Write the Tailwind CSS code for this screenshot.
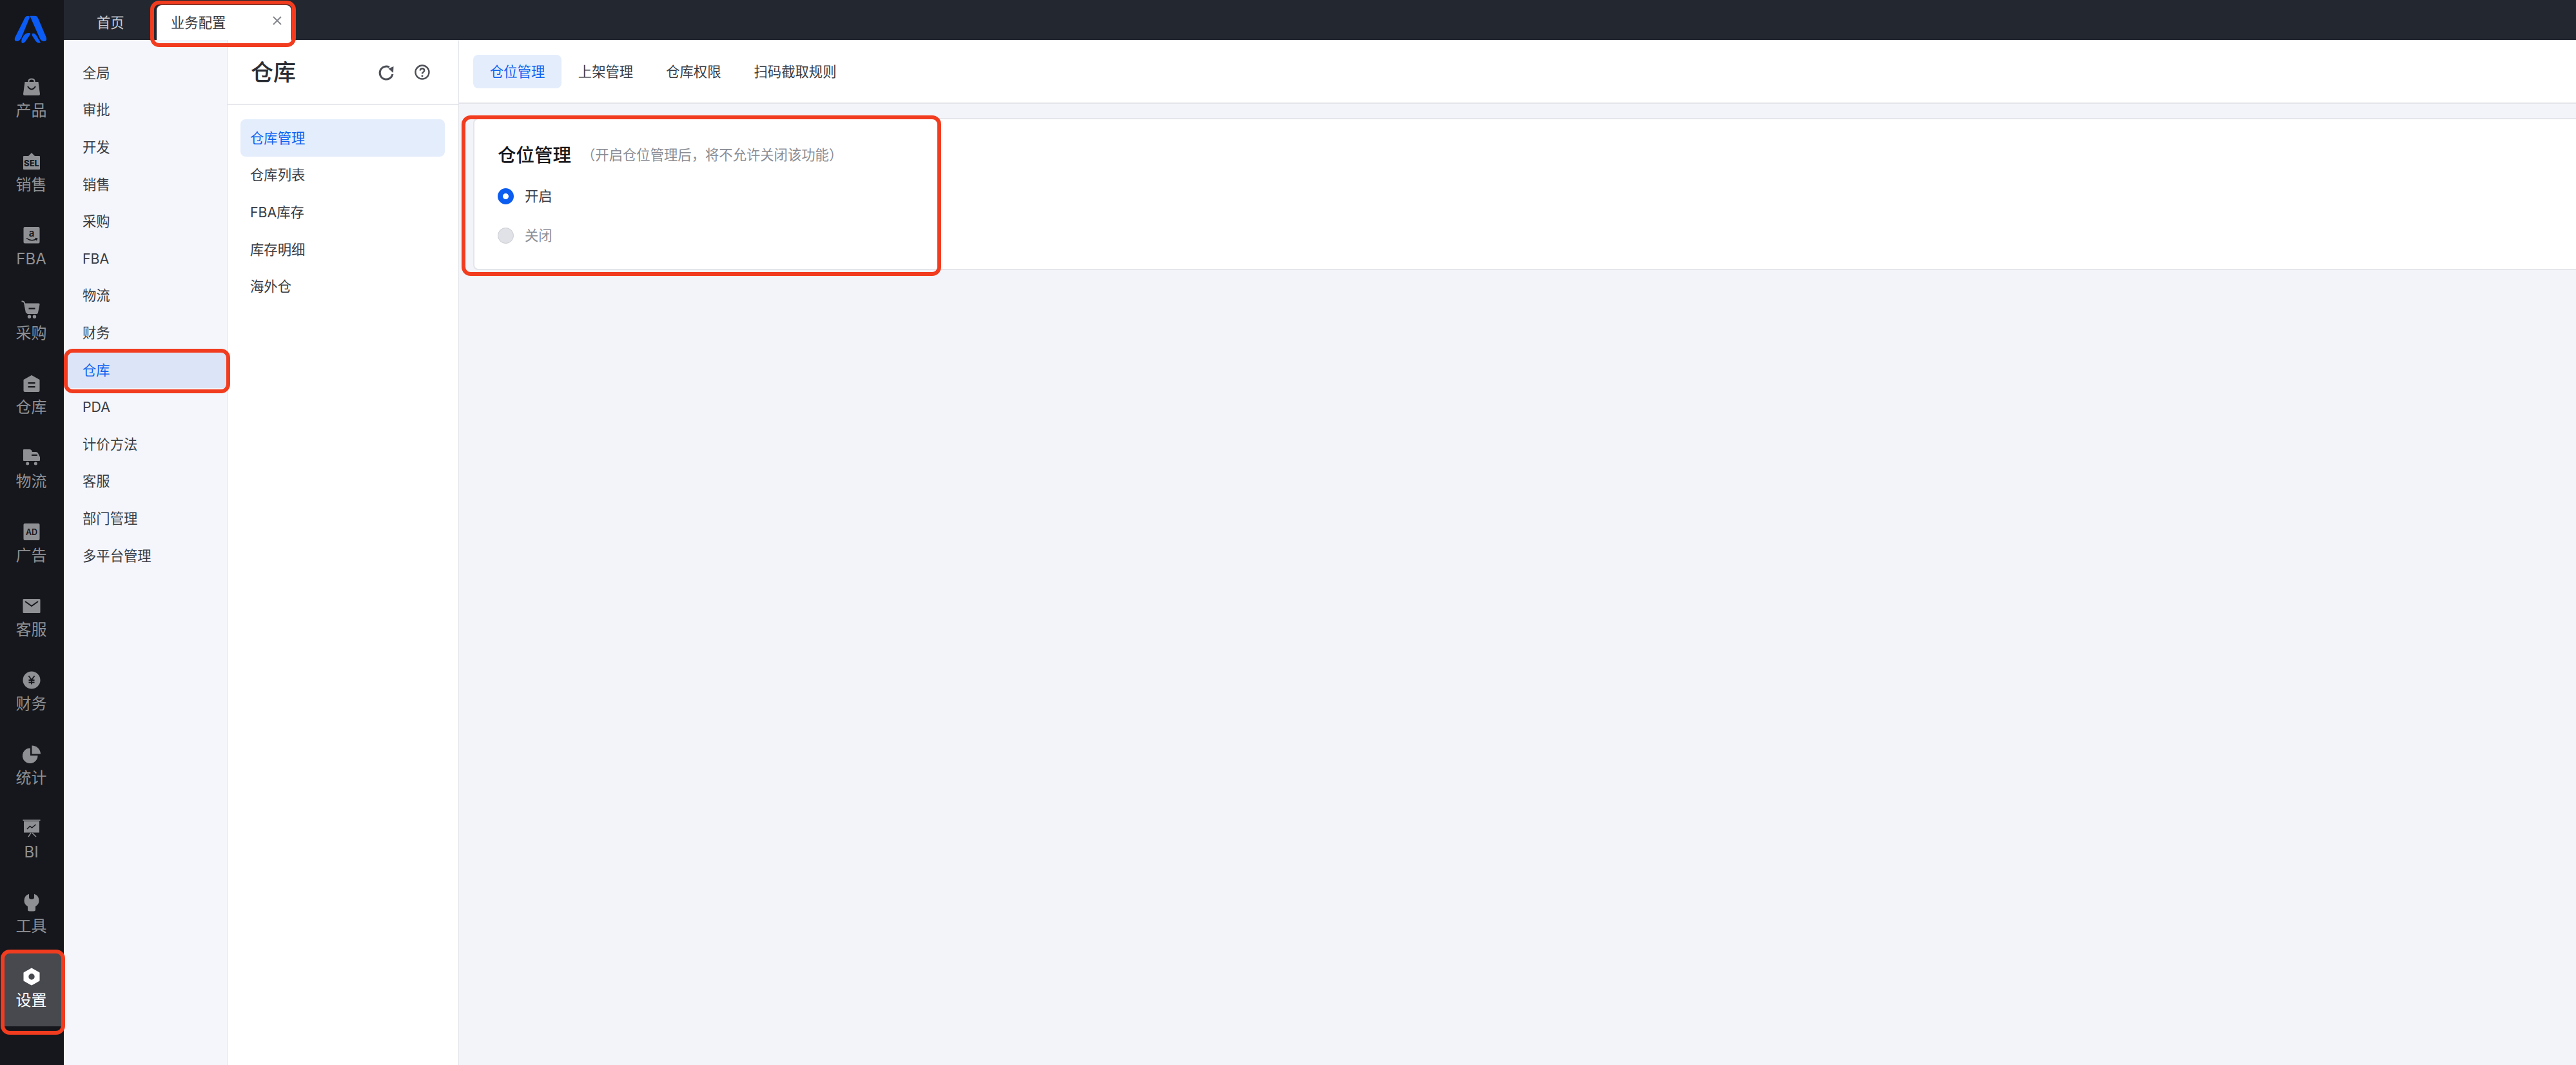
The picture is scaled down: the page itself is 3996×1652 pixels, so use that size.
<!DOCTYPE html>
<html lang="zh-CN">
<head>
  <meta charset="UTF-8">
  <meta name="viewport" content="width=device-width, initial-scale=1.0">
  <title>业务配置</title>
  <script src="https://cdn.jsdelivr.net/npm/@tailwindcss/browser@4"></script>
</head>
<body class="relative w-[3996px] h-[1652px] overflow-hidden flex bg-[#f2f4f9] text-[#3a3d44] text-[21.33px] font-['Inter','Noto_Sans_CJK_SC',sans-serif]">

  <!-- Main rail -->
  <aside class="w-[99px] shrink-0 bg-[#15171c] flex flex-col text-[#8e9094] text-[24px]">
    <div class="h-[98px] pl-[19px] pt-[20px]">
      <svg class="w-[60px] h-[60px]" viewBox="0 0 180 180" fill="#0b5cf5">
        <path d="M60 20Q66 13 74 14Q83 15 80 24L44 112Q36 132 22 132Q8 132 12 116Z"/>
        <path d="M82 14H106Q116 14 120 24L159 116Q162 132 148 132Q134 132 128 118Z"/>
        <path d="M44 139Q40 128 48 114Q60 92 78 93Q86 93 84 100L62 132Q52 145 44 139Z"/>
        <path d="M92 97Q104 92 112 104L132 138Q118 145 108 130L92 105Z"/>
      </svg>
    </div>

    <a class="h-[115px] pr-[2px] flex flex-col items-center pt-[23px]">
      <svg class="w-[28px] h-[28px]" viewBox="0 0 28 28" fill="#8e9094"><path d="M3.5 6H24.5L27 25Q27 27 25 27H3Q1 27 1 25Z"/><path d="M9.5 7V5Q9.5 1.5 14 1.5T18.5 5V7" fill="none" stroke="#8e9094" stroke-width="2"/><path d="M8 13Q14 22 20 13" fill="none" stroke="#15171c" stroke-width="2"/></svg>
      <span class="mt-[6px] h-[34px] leading-[34px]">产品</span>
    </a>
    <a class="h-[115px] pr-[2px] flex flex-col items-center pt-[23px]">
      <svg class="w-[28px] h-[28px]" viewBox="0 0 28 28" fill="#8e9094"><path d="M2 6H9L14 1L19 6H26Q27 6 27 7V26Q27 27 26 27H2Q1 27 1 26V7Q1 6 2 6Z"/><text x="14" y="21.5" text-anchor="middle" font-size="13" font-weight="800" fill="#15171c" font-family="Inter">SEL</text></svg>
      <span class="mt-[6px] h-[34px] leading-[34px]">销售</span>
    </a>
    <a class="h-[115px] pr-[2px] flex flex-col items-center pt-[23px]">
      <svg class="w-[28px] h-[28px]" viewBox="0 0 28 28" fill="#8e9094"><rect x="1.5" y="1" width="25" height="25.5" rx="2"/><text x="14" y="16" text-anchor="middle" font-size="15" font-weight="600" fill="#15171c" font-family="Inter">a</text><path d="M6 18.5Q14 24.5 22 19.5M19.5 18.5L22.5 19L21.5 22" fill="none" stroke="#15171c" stroke-width="1.5"/></svg>
      <span class="mt-[6px] h-[34px] leading-[34px]">FBA</span>
    </a>
    <a class="h-[115px] pr-[2px] flex flex-col items-center pt-[23px]">
      <svg class="w-[32px] h-[28px]" viewBox="0 0 32 28" fill="#8e9094"><path d="M4.5 4.5H27Q29 4.5 28.5 6.5L26 19Q25.5 21 24 21H10Q8.5 21 8 19Z"/><path d="M0.5 1.5H2.5Q4 1.5 5 4L8 19" fill="none" stroke="#8e9094" stroke-width="2"/><circle cx="12.5" cy="25.3" r="2.7"/><circle cx="20.5" cy="25.3" r="2.7"/><rect x="11.5" y="11.5" width="10" height="2.2" fill="#15171c"/></svg>
      <span class="mt-[6px] h-[34px] leading-[34px]">采购</span>
    </a>
    <a class="h-[115px] pr-[2px] flex flex-col items-center pt-[23px]">
      <svg class="w-[28px] h-[28px]" viewBox="0 0 28 28" fill="#8e9094"><path d="M14 1L26.5 8V25Q26.5 27 24.5 27H3.5Q1.5 27 1.5 25V8Z"/><rect x="8.5" y="12" width="11" height="2.2" fill="#15171c"/><rect x="8.5" y="18" width="11" height="2.2" fill="#15171c"/></svg>
      <span class="mt-[6px] h-[34px] leading-[34px]">仓库</span>
    </a>
    <a class="h-[115px] pr-[2px] flex flex-col items-center pt-[23px]">
      <svg class="w-[28px] h-[28px]" viewBox="0 0 28 28" fill="#8e9094"><path d="M2 1H11Q13 1 14 2.5L15 5H21Q23 5 24 7L27 13V18Q27 19 26 19H2Q1 19 1 18V2Q1 1 2 1Z"/><circle cx="7.7" cy="23" r="2.5"/><circle cx="20.3" cy="23" r="2.5"/><rect x="14" y="9" width="9" height="2" fill="#15171c"/></svg>
      <span class="mt-[6px] h-[34px] leading-[34px]">物流</span>
    </a>
    <a class="h-[115px] pr-[2px] flex flex-col items-center pt-[23px]">
      <svg class="w-[28px] h-[28px]" viewBox="0 0 28 28" fill="#8e9094"><rect x="1.5" y="1" width="25" height="26" rx="2"/><text x="14" y="18.5" text-anchor="middle" font-size="12.5" font-weight="600" fill="#15171c" font-family="Inter">AD</text></svg>
      <span class="mt-[6px] h-[34px] leading-[34px]">广告</span>
    </a>
    <a class="h-[115px] pr-[2px] flex flex-col items-center pt-[23px]">
      <svg class="w-[28px] h-[28px]" viewBox="0 0 28 28" fill="#8e9094"><rect x="0.5" y="3" width="27" height="22" rx="1.5"/><path d="M4 7L14 14L24 7" fill="none" stroke="#15171c" stroke-width="2"/></svg>
      <span class="mt-[6px] h-[34px] leading-[34px]">客服</span>
    </a>
    <a class="h-[115px] pr-[2px] flex flex-col items-center pt-[23px]">
      <svg class="w-[28px] h-[28px]" viewBox="0 0 28 28" fill="#8e9094"><circle cx="14" cy="14" r="13.5"/><path d="M9.5 7.5L14 13.5L18.5 7.5M14 13.5V20.5M9.5 14H18.5M9.5 17.5H18.5" fill="none" stroke="#15171c" stroke-width="1.8"/></svg>
      <span class="mt-[6px] h-[34px] leading-[34px]">财务</span>
    </a>
    <a class="h-[115px] pr-[2px] flex flex-col items-center pt-[23px]">
      <svg class="w-[28px] h-[28px]" viewBox="0 0 28 28" fill="#8e9094"><path d="M12 4.5V16H23.5A11.8 11.8 0 1 1 12 4.5Z"/><path d="M14.5 0.5A13.5 13.5 0 0 1 28 13.5H14.5Z"/></svg>
      <span class="mt-[6px] h-[34px] leading-[34px]">统计</span>
    </a>
    <a class="h-[115px] pr-[2px] flex flex-col items-center pt-[23px]">
      <svg class="w-[28px] h-[28px]" viewBox="0 0 28 28" fill="#8e9094"><rect x="0.5" y="0.5" width="27" height="1.5"/><path d="M2 3H26V20.5H2Z"/><path d="M7 15L11.5 10.5L14.5 13L20.5 8" fill="none" stroke="#15171c" stroke-width="1.5"/><path d="M13 21L9 27M15 21L21 27" fill="none" stroke="#8e9094" stroke-width="1.5"/></svg>
      <span class="mt-[6px] h-[34px] leading-[34px]">BI</span>
    </a>
    <a class="h-[115px] pr-[2px] flex flex-col items-center pt-[23px]">
      <svg class="w-[28px] h-[28px]" viewBox="0 0 28 28" fill="#8e9094"><path d="M10 0.8V6Q10 9 14 9T18 6V0.8Q25.5 3 25.5 11Q25.5 17 20 20V25Q20 27.5 17 27.5H11Q8 27.5 8 25V20Q2.5 17 2.5 11Q2.5 3 10 0.8Z"/></svg>
      <span class="mt-[6px] h-[34px] leading-[34px]">工具</span>
    </a>
    <a class="h-[114px] ml-[6px] mr-[4px] pr-[4px] bg-[#47494f] text-white flex flex-col items-center pt-[23px]">
      <svg class="w-[28px] h-[28px]" viewBox="0 0 28 28"><path d="M14 1.5L25.5 8V20L14 26.5L2.5 20V8Z" fill="#ffffff" stroke="#ffffff" stroke-width="2" stroke-linejoin="round"/><circle cx="14" cy="14" r="4.7" fill="#47494f"/></svg>
      <span class="mt-[6px] h-[34px] leading-[34px]">设置</span>
    </a>
  </aside>

  <div class="flex-1 flex flex-col min-w-0">
    <!-- Tab bar -->
    <header class="h-[62px] shrink-0 bg-[#232730] flex">
      <div class="w-[144px] pl-[51px] pt-[8px] leading-[54px] text-[#c9cbd0]">首页</div>
      <div class="w-[209px] mt-[8px] bg-white rounded-t-[8px] flex justify-between pl-[22px] pr-[14px] leading-[54px]">
        <span>业务配置</span>
        <svg class="w-[16px] h-[16px] mt-[16px]" viewBox="0 0 16 16" fill="none" stroke="#85888e" stroke-width="2"><path d="M2 2L14 14M14 2L2 14"/></svg>
      </div>
    </header>

    <div class="flex-1 flex min-h-0">
      <!-- Category nav -->
      <nav class="w-[254px] shrink-0 bg-[#f4f6fb] border-r border-[#e2e4ea] pt-[22px]">
        <div class="h-[57.6px] pl-[29px] pt-[2px] flex items-center">全局</div>
        <div class="h-[57.6px] pl-[29px] pt-[2px] flex items-center">审批</div>
        <div class="h-[57.6px] pl-[29px] pt-[2px] flex items-center">开发</div>
        <div class="h-[57.6px] pl-[29px] pt-[2px] flex items-center">销售</div>
        <div class="h-[57.6px] pl-[29px] pt-[2px] flex items-center">采购</div>
        <div class="h-[57.6px] pl-[29px] pt-[2px] flex items-center">FBA</div>
        <div class="h-[57.6px] pl-[29px] pt-[2px] flex items-center">物流</div>
        <div class="h-[57.6px] pl-[29px] pt-[2px] flex items-center">财务</div>
        <div class="h-[57.6px] pl-[29px] pt-[2px] flex items-center bg-[#dce5f7] text-[#0f62f0]">仓库</div>
        <div class="h-[57.6px] pl-[29px] pt-[2px] flex items-center">PDA</div>
        <div class="h-[57.6px] pl-[29px] pt-[2px] flex items-center">计价方法</div>
        <div class="h-[57.6px] pl-[29px] pt-[2px] flex items-center">客服</div>
        <div class="h-[57.6px] pl-[29px] pt-[2px] flex items-center">部门管理</div>
        <div class="h-[57.6px] pl-[29px] pt-[2px] flex items-center">多平台管理</div>
      </nav>

      <!-- Warehouse menu -->
      <section class="w-[359px] shrink-0 bg-white border-r border-[#e2e4ea]">
        <div class="h-[101px] border-b-2 border-[#e8e9ee] flex items-center pl-[36px] pr-[44px]">
          <h1 class="pt-[2px] text-[35px] font-medium text-[#2b2e35]">仓库</h1>
          <svg class="w-[28px] h-[28px] ml-auto" viewBox="0 0 28 28" fill="none" stroke="#4d5057" stroke-width="3"><path d="M24 17A10 10 0 1 1 19 6.3"/><path d="M17.5 8.5L25.5 5L25 15Z" fill="#4d5057" stroke="none"/></svg>
          <svg class="w-[24px] h-[24px] ml-[30px]" viewBox="0 0 24 24" fill="none" stroke="#4d5057" stroke-width="2.4"><circle cx="12" cy="12" r="10.5"/><path d="M8.8 9.5Q9 6.3 12 6.3T15.2 9.2Q15.2 11 13.5 12Q12 12.9 12 14.5"/><circle cx="12" cy="17.8" r="1.5" fill="#4d5057" stroke="none"/></svg>
        </div>
        <div class="pt-[22px] px-[20px]">
          <div class="w-[317px] h-[57.6px] pl-[15px] pt-[2px] flex items-center rounded-[8px] bg-[#e4edfc] text-[#0f62f0]">仓库管理</div>
          <div class="h-[57.6px] pl-[15px] pt-[2px] flex items-center">仓库列表</div>
          <div class="h-[57.6px] pl-[15px] pt-[2px] flex items-center">FBA库存</div>
          <div class="h-[57.6px] pl-[15px] pt-[2px] flex items-center">库存明细</div>
          <div class="h-[57.6px] pl-[15px] pt-[2px] flex items-center">海外仓</div>
        </div>
      </section>

      <!-- Content -->
      <main class="flex-1 min-w-0">
        <div class="h-[99px] bg-white border-b-2 border-[#e4e5ea] flex items-center pl-[22px]">
          <div class="h-[52px] px-[26px] pt-[2px] flex items-center rounded-[8px] bg-[#e4edfc] text-[#0f62f0]">仓位管理</div>
          <div class="h-[52px] px-[25.5px] pt-[2px] flex items-center">上架管理</div>
          <div class="h-[52px] px-[25.5px] pt-[2px] flex items-center">仓库权限</div>
          <div class="h-[52px] px-[25.5px] pt-[2px] flex items-center">扫码截取规则</div>
        </div>
        <div class="ml-[22px] mt-[22px] h-[236px] bg-white border-2 border-r-0 border-[#e4e5ea] rounded-l-[8px] pl-[36px] pt-[36px]">
          <div class="h-[40px] flex items-center">
            <h2 class="text-[28.5px] font-medium text-[#15171c]">仓位管理</h2>
            <span class="ml-[16px] text-[#8a8d94]">（开启仓位管理后，将不允许关闭该功能）</span>
          </div>
          <div class="h-[61px] mt-[13px] flex items-center gap-[17px]">
            <span class="w-[25px] h-[25px] rounded-full border-[8px] border-[#0b5cf0] bg-white"></span>
            <span>开启</span>
          </div>
          <div class="h-[61px] flex items-center gap-[17px] text-[#8d9097]">
            <span class="w-[25px] h-[25px] rounded-full border border-[#cbcdd3] bg-[#e0e2e7]"></span>
            <span>关闭</span>
          </div>
        </div>
      </main>
    </div>
  </div>

  <!-- Red annotation frames drawn over the screenshot -->
  <div class="absolute left-[233px] top-[1px] w-[226px] h-[72px] border-[6px] border-[#f23c1f] rounded-[14px]"></div>
  <div class="absolute left-[99px] top-[541px] w-[258px] h-[69px] border-[6px] border-[#f23c1f] rounded-[14px]"></div>
  <div class="absolute left-[716px] top-[179px] w-[744px] h-[249px] border-[6px] border-[#f23c1f] rounded-[14px]"></div>
  <div class="absolute left-[1px] top-[1473px] w-[100px] h-[132px] border-[6px] border-[#f23c1f] rounded-[14px]"></div>
</body>
</html>
